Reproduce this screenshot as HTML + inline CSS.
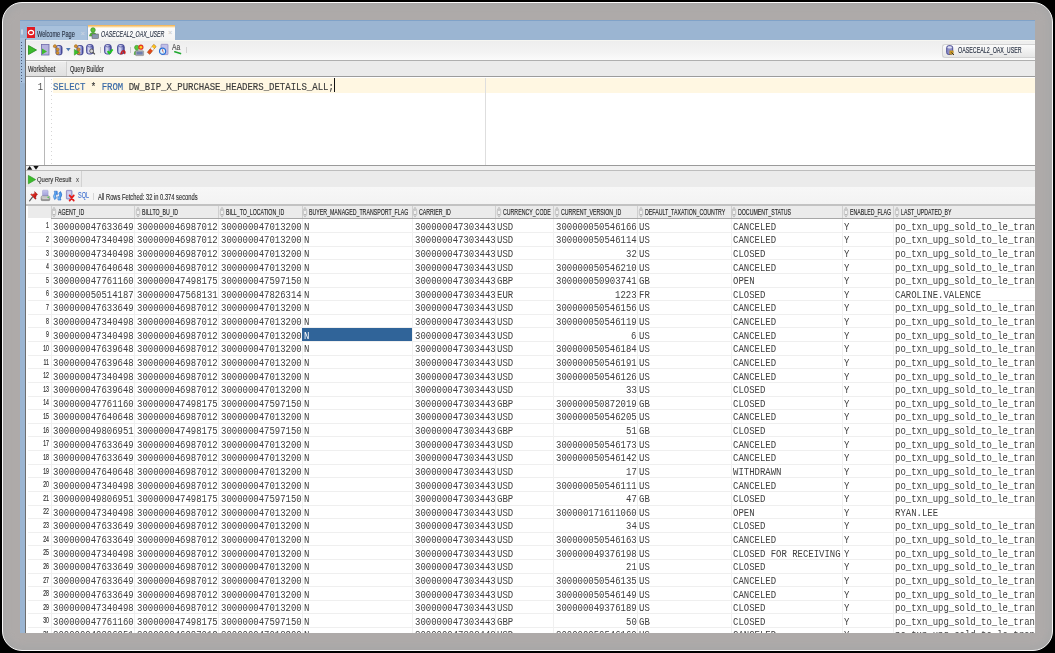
<!DOCTYPE html><html><head><meta charset="utf-8"><style>
*{margin:0;padding:0;box-sizing:border-box}
html,body{width:1055px;height:653px;overflow:hidden;background:#000}
.a{position:absolute}
.t{position:absolute;white-space:pre;transform-origin:0 0;line-height:1}
.r{text-align:right;transform-origin:100% 0}
.m{font-family:"Liberation Mono",monospace}
.s{font-family:"Liberation Sans",sans-serif;-webkit-text-stroke:0.12px currentColor}
svg{position:absolute;overflow:visible}
</style></head><body>

<div class="a" style="left:2px;top:2px;width:1051px;height:649px;border-radius:20px;background:#a9a8a8;border:1px solid #fafafa"></div>
<div class="a" style="left:8px;top:8px;width:1039px;height:637px;border-radius:14px;background:#aeaaa9;filter:blur(2.5px)"></div>
<div class="a" style="left:0;top:0;width:1035px;height:633px;overflow:hidden">
<div class="a" style="left:20px;top:20px;width:1015px;height:613px;background:#9bb5d2"></div>
<div class="a" style="left:20px;top:20px;width:1015px;height:1px;background:#80a2c8"></div>
<div class="a" style="left:20.3px;top:37.7px;width:4.3px;height:45.3px;background:#a7c0dc"></div>
<div class="a" style="left:20.8px;top:29px;width:2.7px;height:5.5px;border:1px solid #c9d6e6;border-radius:1px"></div>
<div class="a" style="left:21.2px;top:41.5px;width:1.2px;height:1.1px;background:#4a5a78"></div>
<div class="a" style="left:21.2px;top:44.5px;width:1.2px;height:1.1px;background:#4a5a78"></div>
<div class="a" style="left:21.2px;top:47.5px;width:1.2px;height:1.1px;background:#4a5a78"></div>
<div class="a" style="left:21.2px;top:50.5px;width:1.2px;height:1.1px;background:#4a5a78"></div>
<div class="a" style="left:21.2px;top:53.5px;width:1.2px;height:1.1px;background:#4a5a78"></div>
<div class="a" style="left:21.2px;top:56.5px;width:1.2px;height:1.1px;background:#4a5a78"></div>
<div class="a" style="left:21.2px;top:59.5px;width:1.2px;height:1.1px;background:#4a5a78"></div>
<div class="a" style="left:21.2px;top:62.5px;width:1.2px;height:1.1px;background:#4a5a78"></div>
<div class="a" style="left:21.2px;top:65.5px;width:1.2px;height:1.1px;background:#4a5a78"></div>
<div class="a" style="left:21.2px;top:68.5px;width:1.2px;height:1.1px;background:#4a5a78"></div>
<div class="a" style="left:21.2px;top:71.5px;width:1.2px;height:1.1px;background:#4a5a78"></div>
<div class="a" style="left:21.2px;top:74.5px;width:1.2px;height:1.1px;background:#4a5a78"></div>
<div class="a" style="left:21.2px;top:77.5px;width:1.2px;height:1.1px;background:#4a5a78"></div>
<div class="a" style="left:21.2px;top:80.5px;width:1.2px;height:1.1px;background:#4a5a78"></div>
<div class="a" style="left:25px;top:39.3px;width:1.1px;height:593.7px;background:#6e6e6e"></div>
<div class="a" style="left:25.5px;top:25px;width:62px;height:15px;background:#a8c1dc;border:1px solid #94b1d1;border-bottom:none;border-radius:2px 2px 0 0"></div>
<svg style="left:27px;top:27px" width="8" height="11" viewBox="0 0 8 11"><rect width="8" height="11" fill="#e21b22"/><ellipse cx="4" cy="5.5" rx="2.6" ry="2.2" fill="none" stroke="#fff" stroke-width="1.2"/></svg>
<div class="t s" style="left:37.2px;top:29.88px;font-size:9px;color:#273042;transform:scaleX(0.62);">Welcome Page</div>
<div class="t s" style="left:80.3px;top:29.83px;font-size:8px;color:#c8d4e2;transform:scaleX(1);">×</div>
<div class="a" style="left:88px;top:25px;width:87px;height:16px;background:linear-gradient(#ffffff,#f3f3f3)"></div>
<div class="a" style="left:88px;top:25px;width:87px;height:2.6px;background:linear-gradient(#f3ae48,#fde2b0 70%,#fff)"></div>
<svg style="left:89px;top:27px" width="10" height="12" viewBox="0 0 10 12"><circle cx="4" cy="3" r="2.3" fill="#5fbf3a" stroke="#2e8a22" stroke-width="0.6"/><path d="M0.5 9 Q1 5.5 4 5.5 Q7 5.5 7.5 9Z" fill="#5fbf3a" stroke="#2e8a22" stroke-width="0.6"/><rect x="3" y="7" width="6.5" height="4.5" fill="#8a96b0" stroke="#555" stroke-width="0.5"/></svg>
<div class="t s" style="left:100.7px;top:29.98px;font-size:9px;color:#273042;transform:scaleX(0.59);font-style:italic">OASECEAL2_OAX_USER</div>
<div class="t s" style="left:168px;top:29.45px;font-size:7.5px;color:#cfcfcf;transform:scaleX(1);">×</div>
<div class="a" style="left:26px;top:40px;width:1009px;height:19.5px;background:linear-gradient(#ededed,#f3f3f3 60%,#fbfbfb)"></div>
<div class="a" style="left:26px;top:40px;width:1009px;height:1.3px;background:#f6f6f2"></div>
<div class="a" style="left:26px;top:59.5px;width:1009px;height:1.5px;background:linear-gradient(#9a9a9a,#c4c4c4)"></div>
<svg style="left:27.5px;top:44.5px" width="9" height="10" viewBox="0 0 9 10"><path d="M0.5 0.5 L8.5 5 L0.5 9.5Z" fill="#3cbb2c" stroke="#1f8a1b" stroke-width="0.8"/></svg>
<svg style="left:40.5px;top:44px" width="9" height="11" viewBox="0 0 9 11"><rect x="0.5" y="0.5" width="7.5" height="10.5" fill="#b6b3de" stroke="#6d6aa8" stroke-width="0.8"/><path d="M1 4.5 L6 7.5 L1 10.5Z" fill="#3cbb2c"/></svg>
<svg style="left:52.5px;top:44px" width="10" height="11" viewBox="0 0 10 11"><defs><linearGradient id="dng" x1="0" y1="0" x2="1" y2="0"><stop offset="0" stop-color="#9a9ed6"/><stop offset="0.4" stop-color="#dcdcf4"/><stop offset="0.75" stop-color="#8a8ed0"/><stop offset="1" stop-color="#34388a"/></linearGradient></defs><rect x="3" y="1.6" width="6" height="9.2" rx="2" fill="url(#dng)" stroke="#383c8a" stroke-width="0.9"/><path d="M1.8 2.2 L4.3 5.3 L4.3 8.9" stroke="#777" stroke-width="0.7" fill="none"/><circle cx="1.9" cy="2.2" r="1.6" fill="#d4922e" stroke="#8c5a1c" stroke-width="0.4"/><circle cx="4.6" cy="5.4" r="1.6" fill="#d4922e" stroke="#8c5a1c" stroke-width="0.4"/><circle cx="4.6" cy="8.9" r="1.6" fill="#d4922e" stroke="#8c5a1c" stroke-width="0.4"/></svg>
<svg style="left:65.8px;top:48.2px" width="5" height="3.5" viewBox="0 0 5 3.5"><path d="M0 0 L4.6 0 L2.3 3.2Z" fill="#4c78b0"/></svg>
<svg style="left:73.8px;top:44px" width="10" height="11.5" viewBox="0 0 10 11.5"><defs><linearGradient id="dng" x1="0" y1="0" x2="1" y2="0"><stop offset="0" stop-color="#9a9ed6"/><stop offset="0.4" stop-color="#dcdcf4"/><stop offset="0.75" stop-color="#8a8ed0"/><stop offset="1" stop-color="#34388a"/></linearGradient></defs><rect x="3" y="1.6" width="6" height="9.2" rx="2" fill="url(#dng)" stroke="#383c8a" stroke-width="0.9"/><path d="M1.8 2.2 L4.3 5.3 L4.3 8.9" stroke="#777" stroke-width="0.7" fill="none"/><circle cx="1.9" cy="2.2" r="1.6" fill="#d4922e" stroke="#8c5a1c" stroke-width="0.4"/><circle cx="4.6" cy="5.4" r="1.6" fill="#d4922e" stroke="#8c5a1c" stroke-width="0.4"/><circle cx="4.6" cy="8.9" r="1.6" fill="#d4922e" stroke="#8c5a1c" stroke-width="0.4"/><path d="M0.3 5.2 L4.8 8.2 L0.3 11.2Z" fill="#3cc22c" stroke="#1e8a1a" stroke-width="0.4"/></svg>
<svg style="left:86.2px;top:44.4px" width="9.5" height="11" viewBox="0 0 9.5 11"><defs><linearGradient id="dbg" x1="0" y1="0" x2="1" y2="0"><stop offset="0" stop-color="#7c80c8"/><stop offset="0.35" stop-color="#e4e4f6"/><stop offset="0.7" stop-color="#9094d0"/><stop offset="1" stop-color="#3a3e8a"/></linearGradient></defs><rect x="0.6" y="0.6" width="6.6" height="9.4" rx="2.3" fill="url(#dbg)" stroke="#3d4190" stroke-width="0.9"/><path d="M1.5 2.4 Q3.9 3.6 6.3 2.4" stroke="#3d4190" stroke-width="0.6" fill="none"/><circle cx="5.6" cy="7" r="1.9" fill="#d8d8d8" stroke="#555" stroke-width="0.8"/><path d="M7 8.4 L8.8 10.4" stroke="#444" stroke-width="1.2"/></svg>
<div class="a" style="left:100px;top:46.6px;width:0.8px;height:6.4px;background:#cdcdcd"></div>
<svg style="left:104px;top:44.4px" width="9.5" height="11" viewBox="0 0 9.5 11"><defs><linearGradient id="dbg" x1="0" y1="0" x2="1" y2="0"><stop offset="0" stop-color="#7c80c8"/><stop offset="0.35" stop-color="#e4e4f6"/><stop offset="0.7" stop-color="#9094d0"/><stop offset="1" stop-color="#3a3e8a"/></linearGradient></defs><rect x="0.6" y="0.6" width="6.6" height="9.4" rx="2.3" fill="url(#dbg)" stroke="#3d4190" stroke-width="0.9"/><path d="M1.5 2.4 Q3.9 3.6 6.3 2.4" stroke="#3d4190" stroke-width="0.6" fill="none"/><path d="M3.6 7.2 L5.4 9.4 L8.6 5.4" fill="none" stroke="#1ec81e" stroke-width="1.9" stroke-linejoin="round"/></svg>
<svg style="left:116.6px;top:44.4px" width="9.5" height="11.5" viewBox="0 0 9.5 11.5"><defs><linearGradient id="dbg" x1="0" y1="0" x2="1" y2="0"><stop offset="0" stop-color="#7c80c8"/><stop offset="0.35" stop-color="#e4e4f6"/><stop offset="0.7" stop-color="#9094d0"/><stop offset="1" stop-color="#3a3e8a"/></linearGradient></defs><rect x="0.6" y="0.6" width="6.6" height="9.4" rx="2.3" fill="url(#dbg)" stroke="#3d4190" stroke-width="0.9"/><path d="M1.5 2.4 Q3.9 3.6 6.3 2.4" stroke="#3d4190" stroke-width="0.6" fill="none"/><path d="M3.8 8.6 Q5 5.2 7.8 6.6 Q9.2 7.8 8 10.2 L6.8 9.2 Q7.4 8 6.4 7.6 Q5.4 7.4 5.2 8.8 L6 9.6 L3.4 10.4Z" fill="#d81e1e" stroke="#a01010" stroke-width="0.3"/></svg>
<div class="a" style="left:130px;top:47px;width:0.8px;height:6px;background:#c8c8c8"></div>
<svg style="left:134px;top:43.8px" width="10" height="12" viewBox="0 0 10 12"><circle cx="2.8" cy="3.6" r="2.3" fill="#58c43a" stroke="#2e8f22" stroke-width="0.5"/><path d="M0.2 10.5 Q0 6.6 2.8 6.4 Q4.6 6.4 5 8 L5 10.5Z" fill="#58c43a" stroke="#2e8f22" stroke-width="0.5"/><circle cx="6.9" cy="3.2" r="2.6" fill="#e23a22"/><circle cx="6.9" cy="3.2" r="1.3" fill="#ffd21f"/><rect x="1.6" y="6.8" width="8" height="4.8" rx="0.6" fill="#b8b8b8" stroke="#777" stroke-width="0.5"/><rect x="2.5" y="7.6" width="6.2" height="3" fill="#6f7fae"/></svg>
<svg style="left:146.8px;top:44.3px" width="9.6" height="11.2" viewBox="0 0 9.6 11.2"><path d="M0.45 8.35 L6.75 0.55 L9.05 2.45 L2.75 10.25 Z" fill="#f28a1c" stroke="#6e3410" stroke-width="0.6" stroke-linejoin="round"/><path d="M4.9 2.85 L6.75 0.55 L9.05 2.45 L7.2 4.75Z" fill="#f9c31e"/><path d="M3.3 4.85 L4.9 2.85 L7.2 4.75 L5.6 6.75Z" fill="#f6f6f6"/><path d="M0.45 8.35 L3.3 4.85 L5.6 6.75 L2.75 10.25Z" fill="#e0481a"/></svg>
<svg style="left:159px;top:44px" width="9.5" height="11.5" viewBox="0 0 9.5 11.5"><rect x="2" y="0.3" width="7" height="10.3" rx="0.6" fill="#c2c0e8" stroke="#7c7ab8" stroke-width="0.6"/><circle cx="3.6" cy="7.2" r="3.1" fill="#dff3ff" stroke="#2b6fd4" stroke-width="1.2"/><path d="M3.6 5.2 L3.6 7.3 L4.8 8.3" stroke="#c23a2a" stroke-width="0.7" fill="none"/></svg>
<div class="t s" style="left:171.8px;top:43.66px;font-size:8.2px;color:#4a4a4a;transform:scaleX(0.82);">Aa</div>
<svg style="left:173.5px;top:50.8px" width="7.5" height="3.5" viewBox="0 0 7.5 3.5"><path d="M0.8 0.8 L6.5 2.6" stroke="#20a830" stroke-width="1.6" stroke-linecap="round"/></svg>
<div class="a" style="left:185.5px;top:47px;width:0.8px;height:6px;background:#d2d2d2"></div>
<div class="a" style="left:942px;top:43.5px;width:93px;height:14px;background:linear-gradient(#fbfbfb,#e6e6e6);border:1px solid #d2d2d2;border-right:none;border-radius:3px 0 0 3px"></div>
<svg style="left:946px;top:44.5px" width="9" height="11" viewBox="0 0 9 11"><rect x="0.7" y="0.7" width="6" height="8.8" rx="2" fill="#8b8dc8" stroke="#40428a" stroke-width="0.9"/><ellipse cx="3.7" cy="2.4" rx="2.3" ry="1.1" fill="#dfe0f2"/><rect x="3.5" y="5.5" width="4" height="4" fill="#c8961e"/><path d="M5.5 7.5 L8 10" stroke="#333" stroke-width="1"/></svg>
<div class="t s" style="left:958px;top:45.72px;font-size:8.6px;color:#273042;transform:scaleX(0.62);">OASECEAL2_OAX_USER</div>
<div class="a" style="left:26px;top:61px;width:1009px;height:15px;background:#ebebeb"></div>
<div class="a" style="left:26px;top:61px;width:41.3px;height:15px;background:linear-gradient(#ececec,#e0e0e0);border-right:1px solid #cfcfcf;border-top:1px solid #f7f7f7"></div>
<div class="t s" style="left:27.9px;top:64.72px;font-size:8.6px;color:#2a2a2a;transform:scaleX(0.67);">Worksheet</div>
<div class="t s" style="left:70.1px;top:65.29px;font-size:8.4px;color:#2a2a2a;transform:scaleX(0.66);">Query Builder</div>
<div class="a" style="left:26px;top:75.7px;width:1009px;height:1px;background:#9c9c9c"></div>
<div class="a" style="left:26px;top:76.7px;width:1009px;height:88.3px;background:#fff"></div>
<div class="a" style="left:52.5px;top:78px;width:982.5px;height:14.7px;background:#fff7e2"></div>
<div class="a" style="left:44px;top:76.7px;width:1.2px;height:88.3px;background:#b8b8b8"></div>
<div class="a" style="left:485px;top:78px;width:1px;height:87px;background:#dedede"></div>
<div class="a" style="left:50.6px;top:78.5px;width:1px;height:1.5px;background:#d6d6d6"></div>
<div class="a" style="left:50.6px;top:82.5px;width:1px;height:1.5px;background:#d6d6d6"></div>
<div class="a" style="left:50.6px;top:86.5px;width:1px;height:1.5px;background:#d6d6d6"></div>
<div class="a" style="left:50.6px;top:90.5px;width:1px;height:1.5px;background:#d6d6d6"></div>
<div class="a" style="left:50.6px;top:94.5px;width:1px;height:1.5px;background:#d6d6d6"></div>
<div class="a" style="left:50.6px;top:98.5px;width:1px;height:1.5px;background:#d6d6d6"></div>
<div class="a" style="left:50.6px;top:102.5px;width:1px;height:1.5px;background:#d6d6d6"></div>
<div class="a" style="left:50.6px;top:106.5px;width:1px;height:1.5px;background:#d6d6d6"></div>
<div class="a" style="left:50.6px;top:110.5px;width:1px;height:1.5px;background:#d6d6d6"></div>
<div class="a" style="left:50.6px;top:114.5px;width:1px;height:1.5px;background:#d6d6d6"></div>
<div class="a" style="left:50.6px;top:118.5px;width:1px;height:1.5px;background:#d6d6d6"></div>
<div class="a" style="left:50.6px;top:122.5px;width:1px;height:1.5px;background:#d6d6d6"></div>
<div class="a" style="left:50.6px;top:126.5px;width:1px;height:1.5px;background:#d6d6d6"></div>
<div class="a" style="left:50.6px;top:130.5px;width:1px;height:1.5px;background:#d6d6d6"></div>
<div class="a" style="left:50.6px;top:134.5px;width:1px;height:1.5px;background:#d6d6d6"></div>
<div class="a" style="left:50.6px;top:138.5px;width:1px;height:1.5px;background:#d6d6d6"></div>
<div class="a" style="left:50.6px;top:142.5px;width:1px;height:1.5px;background:#d6d6d6"></div>
<div class="a" style="left:50.6px;top:146.5px;width:1px;height:1.5px;background:#d6d6d6"></div>
<div class="a" style="left:50.6px;top:150.5px;width:1px;height:1.5px;background:#d6d6d6"></div>
<div class="a" style="left:50.6px;top:154.5px;width:1px;height:1.5px;background:#d6d6d6"></div>
<div class="a" style="left:50.6px;top:158.5px;width:1px;height:1.5px;background:#d6d6d6"></div>
<div class="a" style="left:50.6px;top:162.5px;width:1px;height:1.5px;background:#d6d6d6"></div>
<div class="t r m" style="left:-157.5px;top:82.07px;width:200px;font-size:11px;color:#4a4a4a;transform:scaleX(0.8);">1</div>
<div class="t m" style="left:53px;top:82.84px;font-size:10px;color:#3a3a3a;transform:scaleX(0.9);-webkit-text-stroke:0.15px currentColor"><span style="color:#3768a6">SELECT</span> * <span style="color:#3768a6">FROM</span> DW_BIP_X_PURCHASE_HEADERS_DETAILS_ALL;</div>
<div class="a" style="left:334px;top:78.3px;width:1.2px;height:14.2px;background:#111"></div>
<div class="a" style="left:26px;top:164.5px;width:1009px;height:1px;background:#9a9a9a"></div>
<div class="a" style="left:26px;top:165.5px;width:1009px;height:4.8px;background:#f2f2f2"></div>
<svg style="left:27.3px;top:166.3px" width="12" height="4" viewBox="0 0 12 4"><path d="M0 3.8 L2.7 0 L5.3 3.8Z M6.3 0 L11.7 0 L9 3.8Z" fill="#111"/></svg>
<div class="a" style="left:26px;top:170.3px;width:1009px;height:1px;background:#bdbdbd"></div>
<div class="a" style="left:26px;top:171.3px;width:1009px;height:15.7px;background:#ebebeb"></div>
<div class="a" style="left:26px;top:171.3px;width:56.4px;height:15.7px;background:linear-gradient(#eeeeee,#e6e6e6);border-right:1px solid #d2d2d2"></div>
<svg style="left:28px;top:174.6px" width="8" height="9.2" viewBox="0 0 8 9.2"><path d="M0.4 0.4 L7.6 4.6 L0.4 8.8Z" fill="#3cbb2c" stroke="#2a9a22" stroke-width="0.7"/></svg>
<div class="t s" style="left:36.8px;top:176.14px;font-size:8.1px;color:#2a2a2a;transform:scaleX(0.73);">Query Result</div>
<div class="t s" style="left:75.8px;top:176.05px;font-size:7.5px;color:#555;transform:scaleX(0.8);">x</div>
<div class="a" style="left:26px;top:187px;width:1009px;height:17px;background:linear-gradient(#f7f7f7,#f3f3f3)"></div>
<svg style="left:28.5px;top:190.5px" width="9" height="11" viewBox="0 0 9 11"><defs><linearGradient id="pg" x1="0" y1="0" x2="1" y2="1"><stop offset="0" stop-color="#ff4a3a"/><stop offset="1" stop-color="#a80000"/></linearGradient></defs><path d="M5.6 0.6 L8.6 3.4 L7.4 4.2 L6.6 6.8 L7.2 7.6 L6.4 8.3 L1.7 3.6 L2.4 2.8 L3.2 3.4 L5.8 2.5 Z" fill="url(#pg)" stroke="#8a0000" stroke-width="0.4"/><path d="M3.6 5.9 L0.6 9.8" stroke="#555" stroke-width="1.1" stroke-linecap="round"/></svg>
<svg style="left:41px;top:190px" width="9" height="11" viewBox="0 0 9 11"><defs><linearGradient id="pp" x1="0" y1="0" x2="0" y2="1"><stop offset="0" stop-color="#c4c4ee"/><stop offset="1" stop-color="#9d9ad6"/></linearGradient><linearGradient id="pb" x1="0" y1="0" x2="0" y2="1"><stop offset="0" stop-color="#e8e8e8"/><stop offset="1" stop-color="#7e7e7e"/></linearGradient></defs><rect x="1.5" y="0.2" width="5.6" height="6.5" rx="0.8" fill="url(#pp)" stroke="#8c8ac4" stroke-width="0.4"/><rect x="0.1" y="6" width="8.7" height="4.6" rx="1.2" fill="url(#pb)" stroke="#6a6a6a" stroke-width="0.5"/><rect x="1.4" y="8.2" width="6" height="0.9" fill="#d8d8d8"/><circle cx="7.2" cy="7.3" r="0.75" fill="#33cc33"/></svg>
<svg style="left:53px;top:190px" width="9.2" height="11.2" viewBox="0 0 9.2 11.2"><defs><linearGradient id="rg" x1="0" y1="0" x2="1" y2="0"><stop offset="0" stop-color="#9ad6ff"/><stop offset="1" stop-color="#2a80e6"/></linearGradient></defs><path d="M1.2 1.2 L4.2 1.2 L4.4 4.8 L3.2 4.0 Q2.0 6.0 3.4 8.2 L1.6 9.6 Q-0.8 6.4 1.8 3.0 Z" fill="url(#rg)" stroke="#1d5fc0" stroke-width="0.55"/><path d="M8.0 10.0 L5.0 10.0 L4.8 6.4 L6.0 7.2 Q7.2 5.2 5.8 3.0 L7.6 1.6 Q10.0 4.8 7.4 8.2 Z" fill="url(#rg)" stroke="#1d5fc0" stroke-width="0.55"/></svg>
<svg style="left:65.8px;top:190px" width="8.5" height="11.5" viewBox="0 0 8.5 11.5"><rect x="0.4" y="0.4" width="5.6" height="8.6" rx="0.6" fill="#b9b6e2" stroke="#7774b3" stroke-width="0.7"/><rect x="1.4" y="1.4" width="3.6" height="6.6" fill="#d0cff0"/><path d="M3.6 5.4 L7.8 10.6 M7.8 5.4 L3.6 10.6" stroke="#e31b1b" stroke-width="1.7" stroke-linecap="round"/></svg>
<div class="t s" style="left:77.8px;top:191.49px;font-size:8.4px;color:#3f70cf;transform:scaleX(0.66);">SQL</div>
<div class="a" style="left:92.5px;top:192.5px;width:0.8px;height:7.5px;background:#d6d6d6"></div>
<div class="t s" style="left:98.4px;top:192.52px;font-size:8.6px;color:#2a2a2a;transform:scaleX(0.67);">All Rows Fetched: 32 in 0.374 seconds</div>
<div class="a" style="left:26px;top:203.9px;width:1009px;height:1.8px;background:#c2c2c2"></div>
<div class="a" style="left:26.2px;top:205.7px;width:1008.8px;height:427.3px;background:#fff"></div>
<div class="a" style="left:27.6px;top:205.7px;width:1007.4px;height:12.5px;background:#ebebeb"></div>
<div class="a" style="left:51px;top:218.2px;width:984px;height:0.8px;background:#a7a7a7"></div>
<div class="a" style="left:50.5px;top:205.7px;width:1px;height:12.5px;background:#d0d0d0"></div>
<svg style="left:52px;top:207px" width="4" height="10.4" viewBox="0 0 4 10.4"><path d="M2 0.3 L3.7 3 L3.7 7.4 L2 10.1 L0.3 7.4 L0.3 3Z" fill="#f2f2f2" stroke="#9c9c9c" stroke-width="0.55"/><path d="M2 1.8 L2.9 3.4 H1.1Z M2 8.6 L2.9 7 H1.1Z" fill="#8c8c8c"/></svg>
<div class="t s" style="left:58px;top:207.62px;font-size:8.6px;color:#222;transform:scaleX(0.61);-webkit-text-stroke:0.12px #222">AGENT_ID</div>
<div class="a" style="left:134.2px;top:205.7px;width:1px;height:12.5px;background:#d0d0d0"></div>
<svg style="left:135.7px;top:207px" width="4" height="10.4" viewBox="0 0 4 10.4"><path d="M2 0.3 L3.7 3 L3.7 7.4 L2 10.1 L0.3 7.4 L0.3 3Z" fill="#f2f2f2" stroke="#9c9c9c" stroke-width="0.55"/><path d="M2 1.8 L2.9 3.4 H1.1Z M2 8.6 L2.9 7 H1.1Z" fill="#8c8c8c"/></svg>
<div class="t s" style="left:141.7px;top:207.62px;font-size:8.6px;color:#222;transform:scaleX(0.61);-webkit-text-stroke:0.12px #222">BILLTO_BU_ID</div>
<div class="a" style="left:218.2px;top:205.7px;width:1px;height:12.5px;background:#d0d0d0"></div>
<svg style="left:219.7px;top:207px" width="4" height="10.4" viewBox="0 0 4 10.4"><path d="M2 0.3 L3.7 3 L3.7 7.4 L2 10.1 L0.3 7.4 L0.3 3Z" fill="#f2f2f2" stroke="#9c9c9c" stroke-width="0.55"/><path d="M2 1.8 L2.9 3.4 H1.1Z M2 8.6 L2.9 7 H1.1Z" fill="#8c8c8c"/></svg>
<div class="t s" style="left:225.7px;top:207.62px;font-size:8.6px;color:#222;transform:scaleX(0.61);-webkit-text-stroke:0.12px #222">BILL_TO_LOCATION_ID</div>
<div class="a" style="left:301.9px;top:205.7px;width:1px;height:12.5px;background:#d0d0d0"></div>
<svg style="left:303.4px;top:207px" width="4" height="10.4" viewBox="0 0 4 10.4"><path d="M2 0.3 L3.7 3 L3.7 7.4 L2 10.1 L0.3 7.4 L0.3 3Z" fill="#f2f2f2" stroke="#9c9c9c" stroke-width="0.55"/><path d="M2 1.8 L2.9 3.4 H1.1Z M2 8.6 L2.9 7 H1.1Z" fill="#8c8c8c"/></svg>
<div class="t s" style="left:309.4px;top:207.62px;font-size:8.6px;color:#222;transform:scaleX(0.61);-webkit-text-stroke:0.12px #222">BUYER_MANAGED_TRANSPORT_FLAG</div>
<div class="a" style="left:411.7px;top:205.7px;width:1px;height:12.5px;background:#d0d0d0"></div>
<svg style="left:413.2px;top:207px" width="4" height="10.4" viewBox="0 0 4 10.4"><path d="M2 0.3 L3.7 3 L3.7 7.4 L2 10.1 L0.3 7.4 L0.3 3Z" fill="#f2f2f2" stroke="#9c9c9c" stroke-width="0.55"/><path d="M2 1.8 L2.9 3.4 H1.1Z M2 8.6 L2.9 7 H1.1Z" fill="#8c8c8c"/></svg>
<div class="t s" style="left:419.2px;top:207.62px;font-size:8.6px;color:#222;transform:scaleX(0.61);-webkit-text-stroke:0.12px #222">CARRIER_ID</div>
<div class="a" style="left:495.3px;top:205.7px;width:1px;height:12.5px;background:#d0d0d0"></div>
<svg style="left:496.8px;top:207px" width="4" height="10.4" viewBox="0 0 4 10.4"><path d="M2 0.3 L3.7 3 L3.7 7.4 L2 10.1 L0.3 7.4 L0.3 3Z" fill="#f2f2f2" stroke="#9c9c9c" stroke-width="0.55"/><path d="M2 1.8 L2.9 3.4 H1.1Z M2 8.6 L2.9 7 H1.1Z" fill="#8c8c8c"/></svg>
<div class="t s" style="left:502.8px;top:207.62px;font-size:8.6px;color:#222;transform:scaleX(0.61);-webkit-text-stroke:0.12px #222">CURRENCY_CODE</div>
<div class="a" style="left:553px;top:205.7px;width:1px;height:12.5px;background:#d0d0d0"></div>
<svg style="left:554.5px;top:207px" width="4" height="10.4" viewBox="0 0 4 10.4"><path d="M2 0.3 L3.7 3 L3.7 7.4 L2 10.1 L0.3 7.4 L0.3 3Z" fill="#f2f2f2" stroke="#9c9c9c" stroke-width="0.55"/><path d="M2 1.8 L2.9 3.4 H1.1Z M2 8.6 L2.9 7 H1.1Z" fill="#8c8c8c"/></svg>
<div class="t s" style="left:560.5px;top:207.62px;font-size:8.6px;color:#222;transform:scaleX(0.61);-webkit-text-stroke:0.12px #222">CURRENT_VERSION_ID</div>
<div class="a" style="left:637px;top:205.7px;width:1px;height:12.5px;background:#d0d0d0"></div>
<svg style="left:638.5px;top:207px" width="4" height="10.4" viewBox="0 0 4 10.4"><path d="M2 0.3 L3.7 3 L3.7 7.4 L2 10.1 L0.3 7.4 L0.3 3Z" fill="#f2f2f2" stroke="#9c9c9c" stroke-width="0.55"/><path d="M2 1.8 L2.9 3.4 H1.1Z M2 8.6 L2.9 7 H1.1Z" fill="#8c8c8c"/></svg>
<div class="t s" style="left:644.5px;top:207.62px;font-size:8.6px;color:#222;transform:scaleX(0.61);-webkit-text-stroke:0.12px #222">DEFAULT_TAXATION_COUNTRY</div>
<div class="a" style="left:730.9px;top:205.7px;width:1px;height:12.5px;background:#d0d0d0"></div>
<svg style="left:732.4px;top:207px" width="4" height="10.4" viewBox="0 0 4 10.4"><path d="M2 0.3 L3.7 3 L3.7 7.4 L2 10.1 L0.3 7.4 L0.3 3Z" fill="#f2f2f2" stroke="#9c9c9c" stroke-width="0.55"/><path d="M2 1.8 L2.9 3.4 H1.1Z M2 8.6 L2.9 7 H1.1Z" fill="#8c8c8c"/></svg>
<div class="t s" style="left:738.4px;top:207.62px;font-size:8.6px;color:#222;transform:scaleX(0.61);-webkit-text-stroke:0.12px #222">DOCUMENT_STATUS</div>
<div class="a" style="left:842.4px;top:205.7px;width:1px;height:12.5px;background:#d0d0d0"></div>
<svg style="left:843.9px;top:207px" width="4" height="10.4" viewBox="0 0 4 10.4"><path d="M2 0.3 L3.7 3 L3.7 7.4 L2 10.1 L0.3 7.4 L0.3 3Z" fill="#f2f2f2" stroke="#9c9c9c" stroke-width="0.55"/><path d="M2 1.8 L2.9 3.4 H1.1Z M2 8.6 L2.9 7 H1.1Z" fill="#8c8c8c"/></svg>
<div class="t s" style="left:849.9px;top:207.62px;font-size:8.6px;color:#222;transform:scaleX(0.61);-webkit-text-stroke:0.12px #222">ENABLED_FLAG</div>
<div class="a" style="left:893.1px;top:205.7px;width:1px;height:12.5px;background:#d0d0d0"></div>
<svg style="left:894.6px;top:207px" width="4" height="10.4" viewBox="0 0 4 10.4"><path d="M2 0.3 L3.7 3 L3.7 7.4 L2 10.1 L0.3 7.4 L0.3 3Z" fill="#f2f2f2" stroke="#9c9c9c" stroke-width="0.55"/><path d="M2 1.8 L2.9 3.4 H1.1Z M2 8.6 L2.9 7 H1.1Z" fill="#8c8c8c"/></svg>
<div class="t s" style="left:900.6px;top:207.62px;font-size:8.6px;color:#222;transform:scaleX(0.61);-webkit-text-stroke:0.12px #222">LAST_UPDATED_BY</div>
<div class="a" style="left:27.6px;top:232.12px;width:1007.4px;height:0.9px;background:#efefef"></div>
<div class="a" style="left:27.6px;top:245.74px;width:1007.4px;height:0.9px;background:#efefef"></div>
<div class="a" style="left:27.6px;top:259.36px;width:1007.4px;height:0.9px;background:#efefef"></div>
<div class="a" style="left:27.6px;top:272.98px;width:1007.4px;height:0.9px;background:#efefef"></div>
<div class="a" style="left:27.6px;top:286.6px;width:1007.4px;height:0.9px;background:#efefef"></div>
<div class="a" style="left:27.6px;top:300.22px;width:1007.4px;height:0.9px;background:#efefef"></div>
<div class="a" style="left:27.6px;top:313.84px;width:1007.4px;height:0.9px;background:#efefef"></div>
<div class="a" style="left:27.6px;top:327.46px;width:1007.4px;height:0.9px;background:#efefef"></div>
<div class="a" style="left:27.6px;top:341.08px;width:1007.4px;height:0.9px;background:#efefef"></div>
<div class="a" style="left:27.6px;top:354.7px;width:1007.4px;height:0.9px;background:#efefef"></div>
<div class="a" style="left:27.6px;top:368.32px;width:1007.4px;height:0.9px;background:#efefef"></div>
<div class="a" style="left:27.6px;top:381.94px;width:1007.4px;height:0.9px;background:#efefef"></div>
<div class="a" style="left:27.6px;top:395.56px;width:1007.4px;height:0.9px;background:#efefef"></div>
<div class="a" style="left:27.6px;top:409.18px;width:1007.4px;height:0.9px;background:#efefef"></div>
<div class="a" style="left:27.6px;top:422.8px;width:1007.4px;height:0.9px;background:#efefef"></div>
<div class="a" style="left:27.6px;top:436.42px;width:1007.4px;height:0.9px;background:#efefef"></div>
<div class="a" style="left:27.6px;top:450.04px;width:1007.4px;height:0.9px;background:#efefef"></div>
<div class="a" style="left:27.6px;top:463.66px;width:1007.4px;height:0.9px;background:#efefef"></div>
<div class="a" style="left:27.6px;top:477.28px;width:1007.4px;height:0.9px;background:#efefef"></div>
<div class="a" style="left:27.6px;top:490.9px;width:1007.4px;height:0.9px;background:#efefef"></div>
<div class="a" style="left:27.6px;top:504.52px;width:1007.4px;height:0.9px;background:#efefef"></div>
<div class="a" style="left:27.6px;top:518.14px;width:1007.4px;height:0.9px;background:#efefef"></div>
<div class="a" style="left:27.6px;top:531.76px;width:1007.4px;height:0.9px;background:#efefef"></div>
<div class="a" style="left:27.6px;top:545.38px;width:1007.4px;height:0.9px;background:#efefef"></div>
<div class="a" style="left:27.6px;top:559px;width:1007.4px;height:0.9px;background:#efefef"></div>
<div class="a" style="left:27.6px;top:572.62px;width:1007.4px;height:0.9px;background:#efefef"></div>
<div class="a" style="left:27.6px;top:586.24px;width:1007.4px;height:0.9px;background:#efefef"></div>
<div class="a" style="left:27.6px;top:599.86px;width:1007.4px;height:0.9px;background:#efefef"></div>
<div class="a" style="left:27.6px;top:613.48px;width:1007.4px;height:0.9px;background:#efefef"></div>
<div class="a" style="left:27.6px;top:627.1px;width:1007.4px;height:0.9px;background:#efefef"></div>
<div class="a" style="left:27.6px;top:640.72px;width:1007.4px;height:0.9px;background:#efefef"></div>
<div class="a" style="left:27.6px;top:654.34px;width:1007.4px;height:0.9px;background:#efefef"></div>
<div class="a" style="left:50.5px;top:219px;width:1px;height:414px;background:#f0f0f0"></div>
<div class="a" style="left:134.2px;top:219px;width:1px;height:414px;background:#f0f0f0"></div>
<div class="a" style="left:218.2px;top:219px;width:1px;height:414px;background:#f0f0f0"></div>
<div class="a" style="left:301.9px;top:219px;width:1px;height:414px;background:#f0f0f0"></div>
<div class="a" style="left:411.7px;top:219px;width:1px;height:414px;background:#f0f0f0"></div>
<div class="a" style="left:495.3px;top:219px;width:1px;height:414px;background:#f0f0f0"></div>
<div class="a" style="left:553px;top:219px;width:1px;height:414px;background:#f0f0f0"></div>
<div class="a" style="left:637px;top:219px;width:1px;height:414px;background:#f0f0f0"></div>
<div class="a" style="left:730.9px;top:219px;width:1px;height:414px;background:#f0f0f0"></div>
<div class="a" style="left:842.4px;top:219px;width:1px;height:414px;background:#f0f0f0"></div>
<div class="a" style="left:893.1px;top:219px;width:1px;height:414px;background:#f0f0f0"></div>
<div class="a" style="left:302.4px;top:328.16px;width:109.4px;height:12.72px;background:#306499"></div>
<div class="t r s" style="left:-151.5px;top:221.39px;width:200px;font-size:8.4px;color:#333;transform:scaleX(0.62);-webkit-text-stroke:0.2px #333">1</div>
<div class="t m" style="left:53.44px;top:221.76px;font-size:11.8px;color:#404040;transform:scaleX(0.76);">300000047633649</div>
<div class="t m" style="left:137.44px;top:221.76px;font-size:11.8px;color:#404040;transform:scaleX(0.76);">300000046987012</div>
<div class="t m" style="left:221.14px;top:221.76px;font-size:11.8px;color:#404040;transform:scaleX(0.76);">300000047013200</div>
<div class="t m" style="left:303.7px;top:221.76px;font-size:11.8px;color:#404040;transform:scaleX(0.76);">N</div>
<div class="t m" style="left:414.54px;top:221.76px;font-size:11.8px;color:#404040;transform:scaleX(0.76);">300000047303443</div>
<div class="t m" style="left:497.1px;top:221.76px;font-size:11.8px;color:#404040;transform:scaleX(0.76);">USD</div>
<div class="t m" style="left:556.24px;top:221.76px;font-size:11.8px;color:#404040;transform:scaleX(0.76);">300000050546166</div>
<div class="t m" style="left:638.8px;top:221.76px;font-size:11.8px;color:#404040;transform:scaleX(0.76);">US</div>
<div class="t m" style="left:732.7px;top:221.76px;font-size:11.8px;color:#404040;transform:scaleX(0.76);">CANCELED</div>
<div class="t m" style="left:844.2px;top:221.76px;font-size:11.8px;color:#404040;transform:scaleX(0.76);">Y</div>
<div class="t m" style="left:894.9px;top:221.76px;font-size:11.8px;color:#404040;transform:scaleX(0.76);">po_txn_upg_sold_to_le_tran</div>
<div class="t r s" style="left:-151.5px;top:235.01px;width:200px;font-size:8.4px;color:#333;transform:scaleX(0.62);-webkit-text-stroke:0.2px #333">2</div>
<div class="t m" style="left:53.44px;top:235.38px;font-size:11.8px;color:#404040;transform:scaleX(0.76);">300000047340498</div>
<div class="t m" style="left:137.44px;top:235.38px;font-size:11.8px;color:#404040;transform:scaleX(0.76);">300000046987012</div>
<div class="t m" style="left:221.14px;top:235.38px;font-size:11.8px;color:#404040;transform:scaleX(0.76);">300000047013200</div>
<div class="t m" style="left:303.7px;top:235.38px;font-size:11.8px;color:#404040;transform:scaleX(0.76);">N</div>
<div class="t m" style="left:414.54px;top:235.38px;font-size:11.8px;color:#404040;transform:scaleX(0.76);">300000047303443</div>
<div class="t m" style="left:497.1px;top:235.38px;font-size:11.8px;color:#404040;transform:scaleX(0.76);">USD</div>
<div class="t m" style="left:556.24px;top:235.38px;font-size:11.8px;color:#404040;transform:scaleX(0.76);">300000050546114</div>
<div class="t m" style="left:638.8px;top:235.38px;font-size:11.8px;color:#404040;transform:scaleX(0.76);">US</div>
<div class="t m" style="left:732.7px;top:235.38px;font-size:11.8px;color:#404040;transform:scaleX(0.76);">CANCELED</div>
<div class="t m" style="left:844.2px;top:235.38px;font-size:11.8px;color:#404040;transform:scaleX(0.76);">Y</div>
<div class="t m" style="left:894.9px;top:235.38px;font-size:11.8px;color:#404040;transform:scaleX(0.76);">po_txn_upg_sold_to_le_tran</div>
<div class="t r s" style="left:-151.5px;top:248.63px;width:200px;font-size:8.4px;color:#333;transform:scaleX(0.62);-webkit-text-stroke:0.2px #333">3</div>
<div class="t m" style="left:53.44px;top:249px;font-size:11.8px;color:#404040;transform:scaleX(0.76);">300000047340498</div>
<div class="t m" style="left:137.44px;top:249px;font-size:11.8px;color:#404040;transform:scaleX(0.76);">300000046987012</div>
<div class="t m" style="left:221.14px;top:249px;font-size:11.8px;color:#404040;transform:scaleX(0.76);">300000047013200</div>
<div class="t m" style="left:303.7px;top:249px;font-size:11.8px;color:#404040;transform:scaleX(0.76);">N</div>
<div class="t m" style="left:414.54px;top:249px;font-size:11.8px;color:#404040;transform:scaleX(0.76);">300000047303443</div>
<div class="t m" style="left:497.1px;top:249px;font-size:11.8px;color:#404040;transform:scaleX(0.76);">USD</div>
<div class="t m" style="left:625.97px;top:249px;font-size:11.8px;color:#404040;transform:scaleX(0.76);">32</div>
<div class="t m" style="left:638.8px;top:249px;font-size:11.8px;color:#404040;transform:scaleX(0.76);">US</div>
<div class="t m" style="left:732.7px;top:249px;font-size:11.8px;color:#404040;transform:scaleX(0.76);">CLOSED</div>
<div class="t m" style="left:844.2px;top:249px;font-size:11.8px;color:#404040;transform:scaleX(0.76);">Y</div>
<div class="t m" style="left:894.9px;top:249px;font-size:11.8px;color:#404040;transform:scaleX(0.76);">po_txn_upg_sold_to_le_tran</div>
<div class="t r s" style="left:-151.5px;top:262.25px;width:200px;font-size:8.4px;color:#333;transform:scaleX(0.62);-webkit-text-stroke:0.2px #333">4</div>
<div class="t m" style="left:53.44px;top:262.62px;font-size:11.8px;color:#404040;transform:scaleX(0.76);">300000047640648</div>
<div class="t m" style="left:137.44px;top:262.62px;font-size:11.8px;color:#404040;transform:scaleX(0.76);">300000046987012</div>
<div class="t m" style="left:221.14px;top:262.62px;font-size:11.8px;color:#404040;transform:scaleX(0.76);">300000047013200</div>
<div class="t m" style="left:303.7px;top:262.62px;font-size:11.8px;color:#404040;transform:scaleX(0.76);">N</div>
<div class="t m" style="left:414.54px;top:262.62px;font-size:11.8px;color:#404040;transform:scaleX(0.76);">300000047303443</div>
<div class="t m" style="left:497.1px;top:262.62px;font-size:11.8px;color:#404040;transform:scaleX(0.76);">USD</div>
<div class="t m" style="left:556.24px;top:262.62px;font-size:11.8px;color:#404040;transform:scaleX(0.76);">300000050546210</div>
<div class="t m" style="left:638.8px;top:262.62px;font-size:11.8px;color:#404040;transform:scaleX(0.76);">US</div>
<div class="t m" style="left:732.7px;top:262.62px;font-size:11.8px;color:#404040;transform:scaleX(0.76);">CANCELED</div>
<div class="t m" style="left:844.2px;top:262.62px;font-size:11.8px;color:#404040;transform:scaleX(0.76);">Y</div>
<div class="t m" style="left:894.9px;top:262.62px;font-size:11.8px;color:#404040;transform:scaleX(0.76);">po_txn_upg_sold_to_le_tran</div>
<div class="t r s" style="left:-151.5px;top:275.87px;width:200px;font-size:8.4px;color:#333;transform:scaleX(0.62);-webkit-text-stroke:0.2px #333">5</div>
<div class="t m" style="left:53.44px;top:276.24px;font-size:11.8px;color:#404040;transform:scaleX(0.76);">300000047761160</div>
<div class="t m" style="left:137.44px;top:276.24px;font-size:11.8px;color:#404040;transform:scaleX(0.76);">300000047498175</div>
<div class="t m" style="left:221.14px;top:276.24px;font-size:11.8px;color:#404040;transform:scaleX(0.76);">300000047597150</div>
<div class="t m" style="left:303.7px;top:276.24px;font-size:11.8px;color:#404040;transform:scaleX(0.76);">N</div>
<div class="t m" style="left:414.54px;top:276.24px;font-size:11.8px;color:#404040;transform:scaleX(0.76);">300000047303443</div>
<div class="t m" style="left:497.1px;top:276.24px;font-size:11.8px;color:#404040;transform:scaleX(0.76);">GBP</div>
<div class="t m" style="left:556.24px;top:276.24px;font-size:11.8px;color:#404040;transform:scaleX(0.76);">300000050903741</div>
<div class="t m" style="left:638.8px;top:276.24px;font-size:11.8px;color:#404040;transform:scaleX(0.76);">GB</div>
<div class="t m" style="left:732.7px;top:276.24px;font-size:11.8px;color:#404040;transform:scaleX(0.76);">OPEN</div>
<div class="t m" style="left:844.2px;top:276.24px;font-size:11.8px;color:#404040;transform:scaleX(0.76);">Y</div>
<div class="t m" style="left:894.9px;top:276.24px;font-size:11.8px;color:#404040;transform:scaleX(0.76);">po_txn_upg_sold_to_le_tran</div>
<div class="t r s" style="left:-151.5px;top:289.49px;width:200px;font-size:8.4px;color:#333;transform:scaleX(0.62);-webkit-text-stroke:0.2px #333">6</div>
<div class="t m" style="left:53.44px;top:289.86px;font-size:11.8px;color:#404040;transform:scaleX(0.76);">300000050514187</div>
<div class="t m" style="left:137.44px;top:289.86px;font-size:11.8px;color:#404040;transform:scaleX(0.76);">300000047568131</div>
<div class="t m" style="left:221.14px;top:289.86px;font-size:11.8px;color:#404040;transform:scaleX(0.76);">300000047826314</div>
<div class="t m" style="left:303.7px;top:289.86px;font-size:11.8px;color:#404040;transform:scaleX(0.76);">N</div>
<div class="t m" style="left:414.54px;top:289.86px;font-size:11.8px;color:#404040;transform:scaleX(0.76);">300000047303443</div>
<div class="t m" style="left:497.1px;top:289.86px;font-size:11.8px;color:#404040;transform:scaleX(0.76);">EUR</div>
<div class="t m" style="left:615.24px;top:289.86px;font-size:11.8px;color:#404040;transform:scaleX(0.76);">1223</div>
<div class="t m" style="left:638.8px;top:289.86px;font-size:11.8px;color:#404040;transform:scaleX(0.76);">FR</div>
<div class="t m" style="left:732.7px;top:289.86px;font-size:11.8px;color:#404040;transform:scaleX(0.76);">CLOSED</div>
<div class="t m" style="left:844.2px;top:289.86px;font-size:11.8px;color:#404040;transform:scaleX(0.76);">Y</div>
<div class="t m" style="left:894.9px;top:289.86px;font-size:11.8px;color:#404040;transform:scaleX(0.76);">CAROLINE.VALENCE</div>
<div class="t r s" style="left:-151.5px;top:303.11px;width:200px;font-size:8.4px;color:#333;transform:scaleX(0.62);-webkit-text-stroke:0.2px #333">7</div>
<div class="t m" style="left:53.44px;top:303.48px;font-size:11.8px;color:#404040;transform:scaleX(0.76);">300000047633649</div>
<div class="t m" style="left:137.44px;top:303.48px;font-size:11.8px;color:#404040;transform:scaleX(0.76);">300000046987012</div>
<div class="t m" style="left:221.14px;top:303.48px;font-size:11.8px;color:#404040;transform:scaleX(0.76);">300000047013200</div>
<div class="t m" style="left:303.7px;top:303.48px;font-size:11.8px;color:#404040;transform:scaleX(0.76);">N</div>
<div class="t m" style="left:414.54px;top:303.48px;font-size:11.8px;color:#404040;transform:scaleX(0.76);">300000047303443</div>
<div class="t m" style="left:497.1px;top:303.48px;font-size:11.8px;color:#404040;transform:scaleX(0.76);">USD</div>
<div class="t m" style="left:556.24px;top:303.48px;font-size:11.8px;color:#404040;transform:scaleX(0.76);">300000050546156</div>
<div class="t m" style="left:638.8px;top:303.48px;font-size:11.8px;color:#404040;transform:scaleX(0.76);">US</div>
<div class="t m" style="left:732.7px;top:303.48px;font-size:11.8px;color:#404040;transform:scaleX(0.76);">CANCELED</div>
<div class="t m" style="left:844.2px;top:303.48px;font-size:11.8px;color:#404040;transform:scaleX(0.76);">Y</div>
<div class="t m" style="left:894.9px;top:303.48px;font-size:11.8px;color:#404040;transform:scaleX(0.76);">po_txn_upg_sold_to_le_tran</div>
<div class="t r s" style="left:-151.5px;top:316.73px;width:200px;font-size:8.4px;color:#333;transform:scaleX(0.62);-webkit-text-stroke:0.2px #333">8</div>
<div class="t m" style="left:53.44px;top:317.1px;font-size:11.8px;color:#404040;transform:scaleX(0.76);">300000047340498</div>
<div class="t m" style="left:137.44px;top:317.1px;font-size:11.8px;color:#404040;transform:scaleX(0.76);">300000046987012</div>
<div class="t m" style="left:221.14px;top:317.1px;font-size:11.8px;color:#404040;transform:scaleX(0.76);">300000047013200</div>
<div class="t m" style="left:303.7px;top:317.1px;font-size:11.8px;color:#404040;transform:scaleX(0.76);">N</div>
<div class="t m" style="left:414.54px;top:317.1px;font-size:11.8px;color:#404040;transform:scaleX(0.76);">300000047303443</div>
<div class="t m" style="left:497.1px;top:317.1px;font-size:11.8px;color:#404040;transform:scaleX(0.76);">USD</div>
<div class="t m" style="left:556.24px;top:317.1px;font-size:11.8px;color:#404040;transform:scaleX(0.76);">300000050546119</div>
<div class="t m" style="left:638.8px;top:317.1px;font-size:11.8px;color:#404040;transform:scaleX(0.76);">US</div>
<div class="t m" style="left:732.7px;top:317.1px;font-size:11.8px;color:#404040;transform:scaleX(0.76);">CANCELED</div>
<div class="t m" style="left:844.2px;top:317.1px;font-size:11.8px;color:#404040;transform:scaleX(0.76);">Y</div>
<div class="t m" style="left:894.9px;top:317.1px;font-size:11.8px;color:#404040;transform:scaleX(0.76);">po_txn_upg_sold_to_le_tran</div>
<div class="t r s" style="left:-151.5px;top:330.35px;width:200px;font-size:8.4px;color:#333;transform:scaleX(0.62);-webkit-text-stroke:0.2px #333">9</div>
<div class="t m" style="left:53.44px;top:330.72px;font-size:11.8px;color:#404040;transform:scaleX(0.76);">300000047340498</div>
<div class="t m" style="left:137.44px;top:330.72px;font-size:11.8px;color:#404040;transform:scaleX(0.76);">300000046987012</div>
<div class="t m" style="left:221.14px;top:330.72px;font-size:11.8px;color:#404040;transform:scaleX(0.76);">300000047013200</div>
<div class="t m" style="left:303.7px;top:330.72px;font-size:11.8px;color:#fff;transform:scaleX(0.76);">N</div>
<div class="t m" style="left:414.54px;top:330.72px;font-size:11.8px;color:#404040;transform:scaleX(0.76);">300000047303443</div>
<div class="t m" style="left:497.1px;top:330.72px;font-size:11.8px;color:#404040;transform:scaleX(0.76);">USD</div>
<div class="t m" style="left:631.34px;top:330.72px;font-size:11.8px;color:#404040;transform:scaleX(0.76);">6</div>
<div class="t m" style="left:638.8px;top:330.72px;font-size:11.8px;color:#404040;transform:scaleX(0.76);">US</div>
<div class="t m" style="left:732.7px;top:330.72px;font-size:11.8px;color:#404040;transform:scaleX(0.76);">CANCELED</div>
<div class="t m" style="left:844.2px;top:330.72px;font-size:11.8px;color:#404040;transform:scaleX(0.76);">Y</div>
<div class="t m" style="left:894.9px;top:330.72px;font-size:11.8px;color:#404040;transform:scaleX(0.76);">po_txn_upg_sold_to_le_tran</div>
<div class="t r s" style="left:-151.5px;top:343.97px;width:200px;font-size:8.4px;color:#333;transform:scaleX(0.62);-webkit-text-stroke:0.2px #333">10</div>
<div class="t m" style="left:53.44px;top:344.34px;font-size:11.8px;color:#404040;transform:scaleX(0.76);">300000047639648</div>
<div class="t m" style="left:137.44px;top:344.34px;font-size:11.8px;color:#404040;transform:scaleX(0.76);">300000046987012</div>
<div class="t m" style="left:221.14px;top:344.34px;font-size:11.8px;color:#404040;transform:scaleX(0.76);">300000047013200</div>
<div class="t m" style="left:303.7px;top:344.34px;font-size:11.8px;color:#404040;transform:scaleX(0.76);">N</div>
<div class="t m" style="left:414.54px;top:344.34px;font-size:11.8px;color:#404040;transform:scaleX(0.76);">300000047303443</div>
<div class="t m" style="left:497.1px;top:344.34px;font-size:11.8px;color:#404040;transform:scaleX(0.76);">USD</div>
<div class="t m" style="left:556.24px;top:344.34px;font-size:11.8px;color:#404040;transform:scaleX(0.76);">300000050546184</div>
<div class="t m" style="left:638.8px;top:344.34px;font-size:11.8px;color:#404040;transform:scaleX(0.76);">US</div>
<div class="t m" style="left:732.7px;top:344.34px;font-size:11.8px;color:#404040;transform:scaleX(0.76);">CANCELED</div>
<div class="t m" style="left:844.2px;top:344.34px;font-size:11.8px;color:#404040;transform:scaleX(0.76);">Y</div>
<div class="t m" style="left:894.9px;top:344.34px;font-size:11.8px;color:#404040;transform:scaleX(0.76);">po_txn_upg_sold_to_le_tran</div>
<div class="t r s" style="left:-151.5px;top:357.59px;width:200px;font-size:8.4px;color:#333;transform:scaleX(0.62);-webkit-text-stroke:0.2px #333">11</div>
<div class="t m" style="left:53.44px;top:357.96px;font-size:11.8px;color:#404040;transform:scaleX(0.76);">300000047639648</div>
<div class="t m" style="left:137.44px;top:357.96px;font-size:11.8px;color:#404040;transform:scaleX(0.76);">300000046987012</div>
<div class="t m" style="left:221.14px;top:357.96px;font-size:11.8px;color:#404040;transform:scaleX(0.76);">300000047013200</div>
<div class="t m" style="left:303.7px;top:357.96px;font-size:11.8px;color:#404040;transform:scaleX(0.76);">N</div>
<div class="t m" style="left:414.54px;top:357.96px;font-size:11.8px;color:#404040;transform:scaleX(0.76);">300000047303443</div>
<div class="t m" style="left:497.1px;top:357.96px;font-size:11.8px;color:#404040;transform:scaleX(0.76);">USD</div>
<div class="t m" style="left:556.24px;top:357.96px;font-size:11.8px;color:#404040;transform:scaleX(0.76);">300000050546191</div>
<div class="t m" style="left:638.8px;top:357.96px;font-size:11.8px;color:#404040;transform:scaleX(0.76);">US</div>
<div class="t m" style="left:732.7px;top:357.96px;font-size:11.8px;color:#404040;transform:scaleX(0.76);">CANCELED</div>
<div class="t m" style="left:844.2px;top:357.96px;font-size:11.8px;color:#404040;transform:scaleX(0.76);">Y</div>
<div class="t m" style="left:894.9px;top:357.96px;font-size:11.8px;color:#404040;transform:scaleX(0.76);">po_txn_upg_sold_to_le_tran</div>
<div class="t r s" style="left:-151.5px;top:371.21px;width:200px;font-size:8.4px;color:#333;transform:scaleX(0.62);-webkit-text-stroke:0.2px #333">12</div>
<div class="t m" style="left:53.44px;top:371.58px;font-size:11.8px;color:#404040;transform:scaleX(0.76);">300000047340498</div>
<div class="t m" style="left:137.44px;top:371.58px;font-size:11.8px;color:#404040;transform:scaleX(0.76);">300000046987012</div>
<div class="t m" style="left:221.14px;top:371.58px;font-size:11.8px;color:#404040;transform:scaleX(0.76);">300000047013200</div>
<div class="t m" style="left:303.7px;top:371.58px;font-size:11.8px;color:#404040;transform:scaleX(0.76);">N</div>
<div class="t m" style="left:414.54px;top:371.58px;font-size:11.8px;color:#404040;transform:scaleX(0.76);">300000047303443</div>
<div class="t m" style="left:497.1px;top:371.58px;font-size:11.8px;color:#404040;transform:scaleX(0.76);">USD</div>
<div class="t m" style="left:556.24px;top:371.58px;font-size:11.8px;color:#404040;transform:scaleX(0.76);">300000050546126</div>
<div class="t m" style="left:638.8px;top:371.58px;font-size:11.8px;color:#404040;transform:scaleX(0.76);">US</div>
<div class="t m" style="left:732.7px;top:371.58px;font-size:11.8px;color:#404040;transform:scaleX(0.76);">CANCELED</div>
<div class="t m" style="left:844.2px;top:371.58px;font-size:11.8px;color:#404040;transform:scaleX(0.76);">Y</div>
<div class="t m" style="left:894.9px;top:371.58px;font-size:11.8px;color:#404040;transform:scaleX(0.76);">po_txn_upg_sold_to_le_tran</div>
<div class="t r s" style="left:-151.5px;top:384.83px;width:200px;font-size:8.4px;color:#333;transform:scaleX(0.62);-webkit-text-stroke:0.2px #333">13</div>
<div class="t m" style="left:53.44px;top:385.2px;font-size:11.8px;color:#404040;transform:scaleX(0.76);">300000047639648</div>
<div class="t m" style="left:137.44px;top:385.2px;font-size:11.8px;color:#404040;transform:scaleX(0.76);">300000046987012</div>
<div class="t m" style="left:221.14px;top:385.2px;font-size:11.8px;color:#404040;transform:scaleX(0.76);">300000047013200</div>
<div class="t m" style="left:303.7px;top:385.2px;font-size:11.8px;color:#404040;transform:scaleX(0.76);">N</div>
<div class="t m" style="left:414.54px;top:385.2px;font-size:11.8px;color:#404040;transform:scaleX(0.76);">300000047303443</div>
<div class="t m" style="left:497.1px;top:385.2px;font-size:11.8px;color:#404040;transform:scaleX(0.76);">USD</div>
<div class="t m" style="left:625.97px;top:385.2px;font-size:11.8px;color:#404040;transform:scaleX(0.76);">33</div>
<div class="t m" style="left:638.8px;top:385.2px;font-size:11.8px;color:#404040;transform:scaleX(0.76);">US</div>
<div class="t m" style="left:732.7px;top:385.2px;font-size:11.8px;color:#404040;transform:scaleX(0.76);">CLOSED</div>
<div class="t m" style="left:844.2px;top:385.2px;font-size:11.8px;color:#404040;transform:scaleX(0.76);">Y</div>
<div class="t m" style="left:894.9px;top:385.2px;font-size:11.8px;color:#404040;transform:scaleX(0.76);">po_txn_upg_sold_to_le_tran</div>
<div class="t r s" style="left:-151.5px;top:398.45px;width:200px;font-size:8.4px;color:#333;transform:scaleX(0.62);-webkit-text-stroke:0.2px #333">14</div>
<div class="t m" style="left:53.44px;top:398.82px;font-size:11.8px;color:#404040;transform:scaleX(0.76);">300000047761160</div>
<div class="t m" style="left:137.44px;top:398.82px;font-size:11.8px;color:#404040;transform:scaleX(0.76);">300000047498175</div>
<div class="t m" style="left:221.14px;top:398.82px;font-size:11.8px;color:#404040;transform:scaleX(0.76);">300000047597150</div>
<div class="t m" style="left:303.7px;top:398.82px;font-size:11.8px;color:#404040;transform:scaleX(0.76);">N</div>
<div class="t m" style="left:414.54px;top:398.82px;font-size:11.8px;color:#404040;transform:scaleX(0.76);">300000047303443</div>
<div class="t m" style="left:497.1px;top:398.82px;font-size:11.8px;color:#404040;transform:scaleX(0.76);">GBP</div>
<div class="t m" style="left:556.24px;top:398.82px;font-size:11.8px;color:#404040;transform:scaleX(0.76);">300000050872019</div>
<div class="t m" style="left:638.8px;top:398.82px;font-size:11.8px;color:#404040;transform:scaleX(0.76);">GB</div>
<div class="t m" style="left:732.7px;top:398.82px;font-size:11.8px;color:#404040;transform:scaleX(0.76);">CLOSED</div>
<div class="t m" style="left:844.2px;top:398.82px;font-size:11.8px;color:#404040;transform:scaleX(0.76);">Y</div>
<div class="t m" style="left:894.9px;top:398.82px;font-size:11.8px;color:#404040;transform:scaleX(0.76);">po_txn_upg_sold_to_le_tran</div>
<div class="t r s" style="left:-151.5px;top:412.07px;width:200px;font-size:8.4px;color:#333;transform:scaleX(0.62);-webkit-text-stroke:0.2px #333">15</div>
<div class="t m" style="left:53.44px;top:412.44px;font-size:11.8px;color:#404040;transform:scaleX(0.76);">300000047640648</div>
<div class="t m" style="left:137.44px;top:412.44px;font-size:11.8px;color:#404040;transform:scaleX(0.76);">300000046987012</div>
<div class="t m" style="left:221.14px;top:412.44px;font-size:11.8px;color:#404040;transform:scaleX(0.76);">300000047013200</div>
<div class="t m" style="left:303.7px;top:412.44px;font-size:11.8px;color:#404040;transform:scaleX(0.76);">N</div>
<div class="t m" style="left:414.54px;top:412.44px;font-size:11.8px;color:#404040;transform:scaleX(0.76);">300000047303443</div>
<div class="t m" style="left:497.1px;top:412.44px;font-size:11.8px;color:#404040;transform:scaleX(0.76);">USD</div>
<div class="t m" style="left:556.24px;top:412.44px;font-size:11.8px;color:#404040;transform:scaleX(0.76);">300000050546205</div>
<div class="t m" style="left:638.8px;top:412.44px;font-size:11.8px;color:#404040;transform:scaleX(0.76);">US</div>
<div class="t m" style="left:732.7px;top:412.44px;font-size:11.8px;color:#404040;transform:scaleX(0.76);">CANCELED</div>
<div class="t m" style="left:844.2px;top:412.44px;font-size:11.8px;color:#404040;transform:scaleX(0.76);">Y</div>
<div class="t m" style="left:894.9px;top:412.44px;font-size:11.8px;color:#404040;transform:scaleX(0.76);">po_txn_upg_sold_to_le_tran</div>
<div class="t r s" style="left:-151.5px;top:425.69px;width:200px;font-size:8.4px;color:#333;transform:scaleX(0.62);-webkit-text-stroke:0.2px #333">16</div>
<div class="t m" style="left:53.44px;top:426.06px;font-size:11.8px;color:#404040;transform:scaleX(0.76);">300000049806951</div>
<div class="t m" style="left:137.44px;top:426.06px;font-size:11.8px;color:#404040;transform:scaleX(0.76);">300000047498175</div>
<div class="t m" style="left:221.14px;top:426.06px;font-size:11.8px;color:#404040;transform:scaleX(0.76);">300000047597150</div>
<div class="t m" style="left:303.7px;top:426.06px;font-size:11.8px;color:#404040;transform:scaleX(0.76);">N</div>
<div class="t m" style="left:414.54px;top:426.06px;font-size:11.8px;color:#404040;transform:scaleX(0.76);">300000047303443</div>
<div class="t m" style="left:497.1px;top:426.06px;font-size:11.8px;color:#404040;transform:scaleX(0.76);">GBP</div>
<div class="t m" style="left:625.97px;top:426.06px;font-size:11.8px;color:#404040;transform:scaleX(0.76);">51</div>
<div class="t m" style="left:638.8px;top:426.06px;font-size:11.8px;color:#404040;transform:scaleX(0.76);">GB</div>
<div class="t m" style="left:732.7px;top:426.06px;font-size:11.8px;color:#404040;transform:scaleX(0.76);">CLOSED</div>
<div class="t m" style="left:844.2px;top:426.06px;font-size:11.8px;color:#404040;transform:scaleX(0.76);">Y</div>
<div class="t m" style="left:894.9px;top:426.06px;font-size:11.8px;color:#404040;transform:scaleX(0.76);">po_txn_upg_sold_to_le_tran</div>
<div class="t r s" style="left:-151.5px;top:439.31px;width:200px;font-size:8.4px;color:#333;transform:scaleX(0.62);-webkit-text-stroke:0.2px #333">17</div>
<div class="t m" style="left:53.44px;top:439.68px;font-size:11.8px;color:#404040;transform:scaleX(0.76);">300000047633649</div>
<div class="t m" style="left:137.44px;top:439.68px;font-size:11.8px;color:#404040;transform:scaleX(0.76);">300000046987012</div>
<div class="t m" style="left:221.14px;top:439.68px;font-size:11.8px;color:#404040;transform:scaleX(0.76);">300000047013200</div>
<div class="t m" style="left:303.7px;top:439.68px;font-size:11.8px;color:#404040;transform:scaleX(0.76);">N</div>
<div class="t m" style="left:414.54px;top:439.68px;font-size:11.8px;color:#404040;transform:scaleX(0.76);">300000047303443</div>
<div class="t m" style="left:497.1px;top:439.68px;font-size:11.8px;color:#404040;transform:scaleX(0.76);">USD</div>
<div class="t m" style="left:556.24px;top:439.68px;font-size:11.8px;color:#404040;transform:scaleX(0.76);">300000050546173</div>
<div class="t m" style="left:638.8px;top:439.68px;font-size:11.8px;color:#404040;transform:scaleX(0.76);">US</div>
<div class="t m" style="left:732.7px;top:439.68px;font-size:11.8px;color:#404040;transform:scaleX(0.76);">CANCELED</div>
<div class="t m" style="left:844.2px;top:439.68px;font-size:11.8px;color:#404040;transform:scaleX(0.76);">Y</div>
<div class="t m" style="left:894.9px;top:439.68px;font-size:11.8px;color:#404040;transform:scaleX(0.76);">po_txn_upg_sold_to_le_tran</div>
<div class="t r s" style="left:-151.5px;top:452.93px;width:200px;font-size:8.4px;color:#333;transform:scaleX(0.62);-webkit-text-stroke:0.2px #333">18</div>
<div class="t m" style="left:53.44px;top:453.3px;font-size:11.8px;color:#404040;transform:scaleX(0.76);">300000047633649</div>
<div class="t m" style="left:137.44px;top:453.3px;font-size:11.8px;color:#404040;transform:scaleX(0.76);">300000046987012</div>
<div class="t m" style="left:221.14px;top:453.3px;font-size:11.8px;color:#404040;transform:scaleX(0.76);">300000047013200</div>
<div class="t m" style="left:303.7px;top:453.3px;font-size:11.8px;color:#404040;transform:scaleX(0.76);">N</div>
<div class="t m" style="left:414.54px;top:453.3px;font-size:11.8px;color:#404040;transform:scaleX(0.76);">300000047303443</div>
<div class="t m" style="left:497.1px;top:453.3px;font-size:11.8px;color:#404040;transform:scaleX(0.76);">USD</div>
<div class="t m" style="left:556.24px;top:453.3px;font-size:11.8px;color:#404040;transform:scaleX(0.76);">300000050546142</div>
<div class="t m" style="left:638.8px;top:453.3px;font-size:11.8px;color:#404040;transform:scaleX(0.76);">US</div>
<div class="t m" style="left:732.7px;top:453.3px;font-size:11.8px;color:#404040;transform:scaleX(0.76);">CANCELED</div>
<div class="t m" style="left:844.2px;top:453.3px;font-size:11.8px;color:#404040;transform:scaleX(0.76);">Y</div>
<div class="t m" style="left:894.9px;top:453.3px;font-size:11.8px;color:#404040;transform:scaleX(0.76);">po_txn_upg_sold_to_le_tran</div>
<div class="t r s" style="left:-151.5px;top:466.55px;width:200px;font-size:8.4px;color:#333;transform:scaleX(0.62);-webkit-text-stroke:0.2px #333">19</div>
<div class="t m" style="left:53.44px;top:466.92px;font-size:11.8px;color:#404040;transform:scaleX(0.76);">300000047640648</div>
<div class="t m" style="left:137.44px;top:466.92px;font-size:11.8px;color:#404040;transform:scaleX(0.76);">300000046987012</div>
<div class="t m" style="left:221.14px;top:466.92px;font-size:11.8px;color:#404040;transform:scaleX(0.76);">300000047013200</div>
<div class="t m" style="left:303.7px;top:466.92px;font-size:11.8px;color:#404040;transform:scaleX(0.76);">N</div>
<div class="t m" style="left:414.54px;top:466.92px;font-size:11.8px;color:#404040;transform:scaleX(0.76);">300000047303443</div>
<div class="t m" style="left:497.1px;top:466.92px;font-size:11.8px;color:#404040;transform:scaleX(0.76);">USD</div>
<div class="t m" style="left:625.97px;top:466.92px;font-size:11.8px;color:#404040;transform:scaleX(0.76);">17</div>
<div class="t m" style="left:638.8px;top:466.92px;font-size:11.8px;color:#404040;transform:scaleX(0.76);">US</div>
<div class="t m" style="left:732.7px;top:466.92px;font-size:11.8px;color:#404040;transform:scaleX(0.76);">WITHDRAWN</div>
<div class="t m" style="left:844.2px;top:466.92px;font-size:11.8px;color:#404040;transform:scaleX(0.76);">Y</div>
<div class="t m" style="left:894.9px;top:466.92px;font-size:11.8px;color:#404040;transform:scaleX(0.76);">po_txn_upg_sold_to_le_tran</div>
<div class="t r s" style="left:-151.5px;top:480.17px;width:200px;font-size:8.4px;color:#333;transform:scaleX(0.62);-webkit-text-stroke:0.2px #333">20</div>
<div class="t m" style="left:53.44px;top:480.54px;font-size:11.8px;color:#404040;transform:scaleX(0.76);">300000047340498</div>
<div class="t m" style="left:137.44px;top:480.54px;font-size:11.8px;color:#404040;transform:scaleX(0.76);">300000046987012</div>
<div class="t m" style="left:221.14px;top:480.54px;font-size:11.8px;color:#404040;transform:scaleX(0.76);">300000047013200</div>
<div class="t m" style="left:303.7px;top:480.54px;font-size:11.8px;color:#404040;transform:scaleX(0.76);">N</div>
<div class="t m" style="left:414.54px;top:480.54px;font-size:11.8px;color:#404040;transform:scaleX(0.76);">300000047303443</div>
<div class="t m" style="left:497.1px;top:480.54px;font-size:11.8px;color:#404040;transform:scaleX(0.76);">USD</div>
<div class="t m" style="left:556.24px;top:480.54px;font-size:11.8px;color:#404040;transform:scaleX(0.76);">300000050546111</div>
<div class="t m" style="left:638.8px;top:480.54px;font-size:11.8px;color:#404040;transform:scaleX(0.76);">US</div>
<div class="t m" style="left:732.7px;top:480.54px;font-size:11.8px;color:#404040;transform:scaleX(0.76);">CANCELED</div>
<div class="t m" style="left:844.2px;top:480.54px;font-size:11.8px;color:#404040;transform:scaleX(0.76);">Y</div>
<div class="t m" style="left:894.9px;top:480.54px;font-size:11.8px;color:#404040;transform:scaleX(0.76);">po_txn_upg_sold_to_le_tran</div>
<div class="t r s" style="left:-151.5px;top:493.79px;width:200px;font-size:8.4px;color:#333;transform:scaleX(0.62);-webkit-text-stroke:0.2px #333">21</div>
<div class="t m" style="left:53.44px;top:494.16px;font-size:11.8px;color:#404040;transform:scaleX(0.76);">300000049806951</div>
<div class="t m" style="left:137.44px;top:494.16px;font-size:11.8px;color:#404040;transform:scaleX(0.76);">300000047498175</div>
<div class="t m" style="left:221.14px;top:494.16px;font-size:11.8px;color:#404040;transform:scaleX(0.76);">300000047597150</div>
<div class="t m" style="left:303.7px;top:494.16px;font-size:11.8px;color:#404040;transform:scaleX(0.76);">N</div>
<div class="t m" style="left:414.54px;top:494.16px;font-size:11.8px;color:#404040;transform:scaleX(0.76);">300000047303443</div>
<div class="t m" style="left:497.1px;top:494.16px;font-size:11.8px;color:#404040;transform:scaleX(0.76);">GBP</div>
<div class="t m" style="left:625.97px;top:494.16px;font-size:11.8px;color:#404040;transform:scaleX(0.76);">47</div>
<div class="t m" style="left:638.8px;top:494.16px;font-size:11.8px;color:#404040;transform:scaleX(0.76);">GB</div>
<div class="t m" style="left:732.7px;top:494.16px;font-size:11.8px;color:#404040;transform:scaleX(0.76);">CLOSED</div>
<div class="t m" style="left:844.2px;top:494.16px;font-size:11.8px;color:#404040;transform:scaleX(0.76);">Y</div>
<div class="t m" style="left:894.9px;top:494.16px;font-size:11.8px;color:#404040;transform:scaleX(0.76);">po_txn_upg_sold_to_le_tran</div>
<div class="t r s" style="left:-151.5px;top:507.41px;width:200px;font-size:8.4px;color:#333;transform:scaleX(0.62);-webkit-text-stroke:0.2px #333">22</div>
<div class="t m" style="left:53.44px;top:507.78px;font-size:11.8px;color:#404040;transform:scaleX(0.76);">300000047340498</div>
<div class="t m" style="left:137.44px;top:507.78px;font-size:11.8px;color:#404040;transform:scaleX(0.76);">300000046987012</div>
<div class="t m" style="left:221.14px;top:507.78px;font-size:11.8px;color:#404040;transform:scaleX(0.76);">300000047013200</div>
<div class="t m" style="left:303.7px;top:507.78px;font-size:11.8px;color:#404040;transform:scaleX(0.76);">N</div>
<div class="t m" style="left:414.54px;top:507.78px;font-size:11.8px;color:#404040;transform:scaleX(0.76);">300000047303443</div>
<div class="t m" style="left:497.1px;top:507.78px;font-size:11.8px;color:#404040;transform:scaleX(0.76);">USD</div>
<div class="t m" style="left:556.24px;top:507.78px;font-size:11.8px;color:#404040;transform:scaleX(0.76);">300000171611060</div>
<div class="t m" style="left:638.8px;top:507.78px;font-size:11.8px;color:#404040;transform:scaleX(0.76);">US</div>
<div class="t m" style="left:732.7px;top:507.78px;font-size:11.8px;color:#404040;transform:scaleX(0.76);">OPEN</div>
<div class="t m" style="left:844.2px;top:507.78px;font-size:11.8px;color:#404040;transform:scaleX(0.76);">Y</div>
<div class="t m" style="left:894.9px;top:507.78px;font-size:11.8px;color:#404040;transform:scaleX(0.76);">RYAN.LEE</div>
<div class="t r s" style="left:-151.5px;top:521.03px;width:200px;font-size:8.4px;color:#333;transform:scaleX(0.62);-webkit-text-stroke:0.2px #333">23</div>
<div class="t m" style="left:53.44px;top:521.4px;font-size:11.8px;color:#404040;transform:scaleX(0.76);">300000047633649</div>
<div class="t m" style="left:137.44px;top:521.4px;font-size:11.8px;color:#404040;transform:scaleX(0.76);">300000046987012</div>
<div class="t m" style="left:221.14px;top:521.4px;font-size:11.8px;color:#404040;transform:scaleX(0.76);">300000047013200</div>
<div class="t m" style="left:303.7px;top:521.4px;font-size:11.8px;color:#404040;transform:scaleX(0.76);">N</div>
<div class="t m" style="left:414.54px;top:521.4px;font-size:11.8px;color:#404040;transform:scaleX(0.76);">300000047303443</div>
<div class="t m" style="left:497.1px;top:521.4px;font-size:11.8px;color:#404040;transform:scaleX(0.76);">USD</div>
<div class="t m" style="left:625.97px;top:521.4px;font-size:11.8px;color:#404040;transform:scaleX(0.76);">34</div>
<div class="t m" style="left:638.8px;top:521.4px;font-size:11.8px;color:#404040;transform:scaleX(0.76);">US</div>
<div class="t m" style="left:732.7px;top:521.4px;font-size:11.8px;color:#404040;transform:scaleX(0.76);">CLOSED</div>
<div class="t m" style="left:844.2px;top:521.4px;font-size:11.8px;color:#404040;transform:scaleX(0.76);">Y</div>
<div class="t m" style="left:894.9px;top:521.4px;font-size:11.8px;color:#404040;transform:scaleX(0.76);">po_txn_upg_sold_to_le_tran</div>
<div class="t r s" style="left:-151.5px;top:534.65px;width:200px;font-size:8.4px;color:#333;transform:scaleX(0.62);-webkit-text-stroke:0.2px #333">24</div>
<div class="t m" style="left:53.44px;top:535.02px;font-size:11.8px;color:#404040;transform:scaleX(0.76);">300000047633649</div>
<div class="t m" style="left:137.44px;top:535.02px;font-size:11.8px;color:#404040;transform:scaleX(0.76);">300000046987012</div>
<div class="t m" style="left:221.14px;top:535.02px;font-size:11.8px;color:#404040;transform:scaleX(0.76);">300000047013200</div>
<div class="t m" style="left:303.7px;top:535.02px;font-size:11.8px;color:#404040;transform:scaleX(0.76);">N</div>
<div class="t m" style="left:414.54px;top:535.02px;font-size:11.8px;color:#404040;transform:scaleX(0.76);">300000047303443</div>
<div class="t m" style="left:497.1px;top:535.02px;font-size:11.8px;color:#404040;transform:scaleX(0.76);">USD</div>
<div class="t m" style="left:556.24px;top:535.02px;font-size:11.8px;color:#404040;transform:scaleX(0.76);">300000050546163</div>
<div class="t m" style="left:638.8px;top:535.02px;font-size:11.8px;color:#404040;transform:scaleX(0.76);">US</div>
<div class="t m" style="left:732.7px;top:535.02px;font-size:11.8px;color:#404040;transform:scaleX(0.76);">CANCELED</div>
<div class="t m" style="left:844.2px;top:535.02px;font-size:11.8px;color:#404040;transform:scaleX(0.76);">Y</div>
<div class="t m" style="left:894.9px;top:535.02px;font-size:11.8px;color:#404040;transform:scaleX(0.76);">po_txn_upg_sold_to_le_tran</div>
<div class="t r s" style="left:-151.5px;top:548.27px;width:200px;font-size:8.4px;color:#333;transform:scaleX(0.62);-webkit-text-stroke:0.2px #333">25</div>
<div class="t m" style="left:53.44px;top:548.64px;font-size:11.8px;color:#404040;transform:scaleX(0.76);">300000047340498</div>
<div class="t m" style="left:137.44px;top:548.64px;font-size:11.8px;color:#404040;transform:scaleX(0.76);">300000046987012</div>
<div class="t m" style="left:221.14px;top:548.64px;font-size:11.8px;color:#404040;transform:scaleX(0.76);">300000047013200</div>
<div class="t m" style="left:303.7px;top:548.64px;font-size:11.8px;color:#404040;transform:scaleX(0.76);">N</div>
<div class="t m" style="left:414.54px;top:548.64px;font-size:11.8px;color:#404040;transform:scaleX(0.76);">300000047303443</div>
<div class="t m" style="left:497.1px;top:548.64px;font-size:11.8px;color:#404040;transform:scaleX(0.76);">USD</div>
<div class="t m" style="left:556.24px;top:548.64px;font-size:11.8px;color:#404040;transform:scaleX(0.76);">300000049376198</div>
<div class="t m" style="left:638.8px;top:548.64px;font-size:11.8px;color:#404040;transform:scaleX(0.76);">US</div>
<div class="t m" style="left:732.7px;top:548.64px;font-size:11.8px;color:#404040;transform:scaleX(0.76);">CLOSED FOR RECEIVING</div>
<div class="t m" style="left:844.2px;top:548.64px;font-size:11.8px;color:#404040;transform:scaleX(0.76);">Y</div>
<div class="t m" style="left:894.9px;top:548.64px;font-size:11.8px;color:#404040;transform:scaleX(0.76);">po_txn_upg_sold_to_le_tran</div>
<div class="t r s" style="left:-151.5px;top:561.89px;width:200px;font-size:8.4px;color:#333;transform:scaleX(0.62);-webkit-text-stroke:0.2px #333">26</div>
<div class="t m" style="left:53.44px;top:562.26px;font-size:11.8px;color:#404040;transform:scaleX(0.76);">300000047633649</div>
<div class="t m" style="left:137.44px;top:562.26px;font-size:11.8px;color:#404040;transform:scaleX(0.76);">300000046987012</div>
<div class="t m" style="left:221.14px;top:562.26px;font-size:11.8px;color:#404040;transform:scaleX(0.76);">300000047013200</div>
<div class="t m" style="left:303.7px;top:562.26px;font-size:11.8px;color:#404040;transform:scaleX(0.76);">N</div>
<div class="t m" style="left:414.54px;top:562.26px;font-size:11.8px;color:#404040;transform:scaleX(0.76);">300000047303443</div>
<div class="t m" style="left:497.1px;top:562.26px;font-size:11.8px;color:#404040;transform:scaleX(0.76);">USD</div>
<div class="t m" style="left:625.97px;top:562.26px;font-size:11.8px;color:#404040;transform:scaleX(0.76);">21</div>
<div class="t m" style="left:638.8px;top:562.26px;font-size:11.8px;color:#404040;transform:scaleX(0.76);">US</div>
<div class="t m" style="left:732.7px;top:562.26px;font-size:11.8px;color:#404040;transform:scaleX(0.76);">CLOSED</div>
<div class="t m" style="left:844.2px;top:562.26px;font-size:11.8px;color:#404040;transform:scaleX(0.76);">Y</div>
<div class="t m" style="left:894.9px;top:562.26px;font-size:11.8px;color:#404040;transform:scaleX(0.76);">po_txn_upg_sold_to_le_tran</div>
<div class="t r s" style="left:-151.5px;top:575.51px;width:200px;font-size:8.4px;color:#333;transform:scaleX(0.62);-webkit-text-stroke:0.2px #333">27</div>
<div class="t m" style="left:53.44px;top:575.88px;font-size:11.8px;color:#404040;transform:scaleX(0.76);">300000047633649</div>
<div class="t m" style="left:137.44px;top:575.88px;font-size:11.8px;color:#404040;transform:scaleX(0.76);">300000046987012</div>
<div class="t m" style="left:221.14px;top:575.88px;font-size:11.8px;color:#404040;transform:scaleX(0.76);">300000047013200</div>
<div class="t m" style="left:303.7px;top:575.88px;font-size:11.8px;color:#404040;transform:scaleX(0.76);">N</div>
<div class="t m" style="left:414.54px;top:575.88px;font-size:11.8px;color:#404040;transform:scaleX(0.76);">300000047303443</div>
<div class="t m" style="left:497.1px;top:575.88px;font-size:11.8px;color:#404040;transform:scaleX(0.76);">USD</div>
<div class="t m" style="left:556.24px;top:575.88px;font-size:11.8px;color:#404040;transform:scaleX(0.76);">300000050546135</div>
<div class="t m" style="left:638.8px;top:575.88px;font-size:11.8px;color:#404040;transform:scaleX(0.76);">US</div>
<div class="t m" style="left:732.7px;top:575.88px;font-size:11.8px;color:#404040;transform:scaleX(0.76);">CANCELED</div>
<div class="t m" style="left:844.2px;top:575.88px;font-size:11.8px;color:#404040;transform:scaleX(0.76);">Y</div>
<div class="t m" style="left:894.9px;top:575.88px;font-size:11.8px;color:#404040;transform:scaleX(0.76);">po_txn_upg_sold_to_le_tran</div>
<div class="t r s" style="left:-151.5px;top:589.13px;width:200px;font-size:8.4px;color:#333;transform:scaleX(0.62);-webkit-text-stroke:0.2px #333">28</div>
<div class="t m" style="left:53.44px;top:589.5px;font-size:11.8px;color:#404040;transform:scaleX(0.76);">300000047633649</div>
<div class="t m" style="left:137.44px;top:589.5px;font-size:11.8px;color:#404040;transform:scaleX(0.76);">300000046987012</div>
<div class="t m" style="left:221.14px;top:589.5px;font-size:11.8px;color:#404040;transform:scaleX(0.76);">300000047013200</div>
<div class="t m" style="left:303.7px;top:589.5px;font-size:11.8px;color:#404040;transform:scaleX(0.76);">N</div>
<div class="t m" style="left:414.54px;top:589.5px;font-size:11.8px;color:#404040;transform:scaleX(0.76);">300000047303443</div>
<div class="t m" style="left:497.1px;top:589.5px;font-size:11.8px;color:#404040;transform:scaleX(0.76);">USD</div>
<div class="t m" style="left:556.24px;top:589.5px;font-size:11.8px;color:#404040;transform:scaleX(0.76);">300000050546149</div>
<div class="t m" style="left:638.8px;top:589.5px;font-size:11.8px;color:#404040;transform:scaleX(0.76);">US</div>
<div class="t m" style="left:732.7px;top:589.5px;font-size:11.8px;color:#404040;transform:scaleX(0.76);">CANCELED</div>
<div class="t m" style="left:844.2px;top:589.5px;font-size:11.8px;color:#404040;transform:scaleX(0.76);">Y</div>
<div class="t m" style="left:894.9px;top:589.5px;font-size:11.8px;color:#404040;transform:scaleX(0.76);">po_txn_upg_sold_to_le_tran</div>
<div class="t r s" style="left:-151.5px;top:602.75px;width:200px;font-size:8.4px;color:#333;transform:scaleX(0.62);-webkit-text-stroke:0.2px #333">29</div>
<div class="t m" style="left:53.44px;top:603.12px;font-size:11.8px;color:#404040;transform:scaleX(0.76);">300000047340498</div>
<div class="t m" style="left:137.44px;top:603.12px;font-size:11.8px;color:#404040;transform:scaleX(0.76);">300000046987012</div>
<div class="t m" style="left:221.14px;top:603.12px;font-size:11.8px;color:#404040;transform:scaleX(0.76);">300000047013200</div>
<div class="t m" style="left:303.7px;top:603.12px;font-size:11.8px;color:#404040;transform:scaleX(0.76);">N</div>
<div class="t m" style="left:414.54px;top:603.12px;font-size:11.8px;color:#404040;transform:scaleX(0.76);">300000047303443</div>
<div class="t m" style="left:497.1px;top:603.12px;font-size:11.8px;color:#404040;transform:scaleX(0.76);">USD</div>
<div class="t m" style="left:556.24px;top:603.12px;font-size:11.8px;color:#404040;transform:scaleX(0.76);">300000049376189</div>
<div class="t m" style="left:638.8px;top:603.12px;font-size:11.8px;color:#404040;transform:scaleX(0.76);">US</div>
<div class="t m" style="left:732.7px;top:603.12px;font-size:11.8px;color:#404040;transform:scaleX(0.76);">CLOSED</div>
<div class="t m" style="left:844.2px;top:603.12px;font-size:11.8px;color:#404040;transform:scaleX(0.76);">Y</div>
<div class="t m" style="left:894.9px;top:603.12px;font-size:11.8px;color:#404040;transform:scaleX(0.76);">po_txn_upg_sold_to_le_tran</div>
<div class="t r s" style="left:-151.5px;top:616.37px;width:200px;font-size:8.4px;color:#333;transform:scaleX(0.62);-webkit-text-stroke:0.2px #333">30</div>
<div class="t m" style="left:53.44px;top:616.74px;font-size:11.8px;color:#404040;transform:scaleX(0.76);">300000047761160</div>
<div class="t m" style="left:137.44px;top:616.74px;font-size:11.8px;color:#404040;transform:scaleX(0.76);">300000047498175</div>
<div class="t m" style="left:221.14px;top:616.74px;font-size:11.8px;color:#404040;transform:scaleX(0.76);">300000047597150</div>
<div class="t m" style="left:303.7px;top:616.74px;font-size:11.8px;color:#404040;transform:scaleX(0.76);">N</div>
<div class="t m" style="left:414.54px;top:616.74px;font-size:11.8px;color:#404040;transform:scaleX(0.76);">300000047303443</div>
<div class="t m" style="left:497.1px;top:616.74px;font-size:11.8px;color:#404040;transform:scaleX(0.76);">GBP</div>
<div class="t m" style="left:625.97px;top:616.74px;font-size:11.8px;color:#404040;transform:scaleX(0.76);">50</div>
<div class="t m" style="left:638.8px;top:616.74px;font-size:11.8px;color:#404040;transform:scaleX(0.76);">GB</div>
<div class="t m" style="left:732.7px;top:616.74px;font-size:11.8px;color:#404040;transform:scaleX(0.76);">CLOSED</div>
<div class="t m" style="left:844.2px;top:616.74px;font-size:11.8px;color:#404040;transform:scaleX(0.76);">Y</div>
<div class="t m" style="left:894.9px;top:616.74px;font-size:11.8px;color:#404040;transform:scaleX(0.76);">po_txn_upg_sold_to_le_tran</div>
<div class="t r s" style="left:-151.5px;top:629.99px;width:200px;font-size:8.4px;color:#333;transform:scaleX(0.62);-webkit-text-stroke:0.2px #333">31</div>
<div class="t m" style="left:53.44px;top:630.36px;font-size:11.8px;color:#404040;transform:scaleX(0.76);">300000049806951</div>
<div class="t m" style="left:137.44px;top:630.36px;font-size:11.8px;color:#404040;transform:scaleX(0.76);">300000046987012</div>
<div class="t m" style="left:221.14px;top:630.36px;font-size:11.8px;color:#404040;transform:scaleX(0.76);">300000047013200</div>
<div class="t m" style="left:303.7px;top:630.36px;font-size:11.8px;color:#404040;transform:scaleX(0.76);">N</div>
<div class="t m" style="left:414.54px;top:630.36px;font-size:11.8px;color:#404040;transform:scaleX(0.76);">300000047303443</div>
<div class="t m" style="left:497.1px;top:630.36px;font-size:11.8px;color:#404040;transform:scaleX(0.76);">USD</div>
<div class="t m" style="left:556.24px;top:630.36px;font-size:11.8px;color:#404040;transform:scaleX(0.76);">300000050546160</div>
<div class="t m" style="left:638.8px;top:630.36px;font-size:11.8px;color:#404040;transform:scaleX(0.76);">US</div>
<div class="t m" style="left:732.7px;top:630.36px;font-size:11.8px;color:#404040;transform:scaleX(0.76);">CANCELED</div>
<div class="t m" style="left:844.2px;top:630.36px;font-size:11.8px;color:#404040;transform:scaleX(0.76);">Y</div>
<div class="t m" style="left:894.9px;top:630.36px;font-size:11.8px;color:#404040;transform:scaleX(0.76);">po_txn_upg_sold_to_le_tran</div>
</div>
</body></html>
